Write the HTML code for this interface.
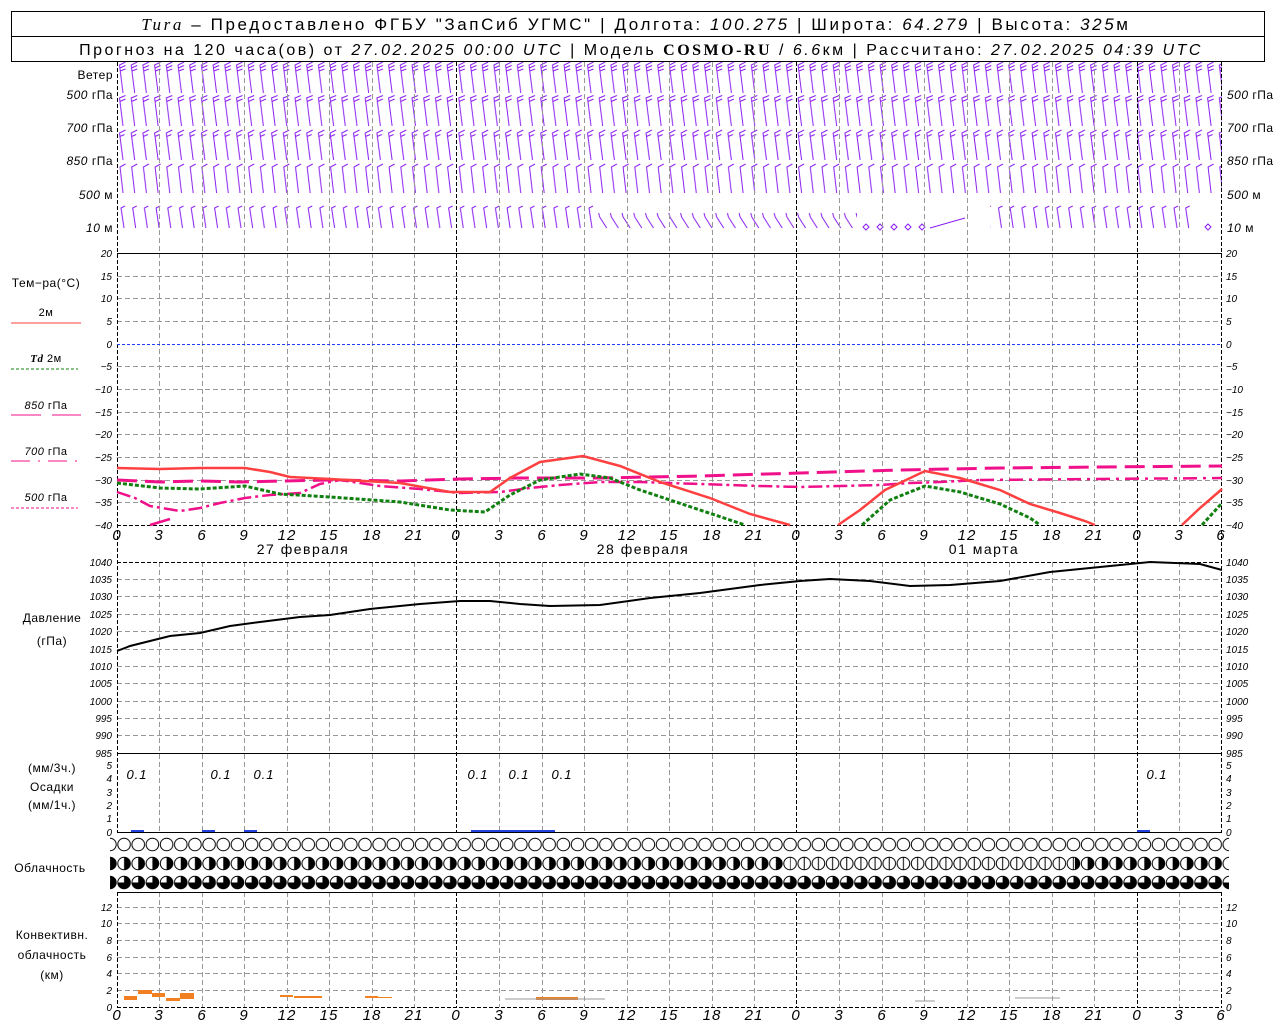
<!DOCTYPE html>
<html><head><meta charset="utf-8"><style>
body{margin:0;background:#fff;width:1280px;height:1024px;overflow:hidden}
svg{display:block}
text{font-family:"Liberation Sans",sans-serif;fill:#000}
.ax{font-size:10px;font-style:italic}
.lb{font-size:12px;letter-spacing:0.5px}
.hr{font-size:15px;font-style:italic}
</style></head><body>
<svg width="1280" height="1024" viewBox="0 0 1280 1024">
<defs>
<pattern id="b" x="117" y="62" width="11.7" height="32" patternUnits="userSpaceOnUse">
<path d="M6,31 L2.5,3 L8.5,0 M2.9,6 L8.5,3.5 M3.3,9 L8.5,7" stroke="#8a1ef0" stroke-width="1" fill="none"/>
</pattern>
<pattern id="b2" x="117" y="95" width="11.7" height="33" patternUnits="userSpaceOnUse">
<path d="M6,31 L2.5,3 L8.5,0.5 M2.9,6.5 L8.5,4" stroke="#8a1ef0" stroke-width="1" fill="none"/>
</pattern>
<pattern id="b3" x="117" y="129" width="11.7" height="32" patternUnits="userSpaceOnUse">
<path d="M6,31 L2.5,4 L8.5,1 M2.9,7.5 L7.5,5.5" stroke="#8a1ef0" stroke-width="1" fill="none"/>
</pattern>
<pattern id="b4" x="117" y="162" width="11.7" height="32" patternUnits="userSpaceOnUse">
<path d="M6,31 L3,5 L8.5,2" stroke="#8a1ef0" stroke-width="1" fill="none"/>
</pattern>
<pattern id="b5" x="117" y="205" width="11.7" height="25" patternUnits="userSpaceOnUse">
<path d="M7,23 L4,3 L8,1" stroke="#8a1ef0" stroke-width="1" fill="none"/>
</pattern>
<pattern id="b6" x="117" y="205" width="11.7" height="25" patternUnits="userSpaceOnUse">
<path d="M10,23 L3,12 M3,12 L2,8" stroke="#8a1ef0" stroke-width="1" fill="none"/>
</pattern>
<pattern id="c0" x="117" y="837" width="14.17" height="16" patternUnits="userSpaceOnUse">
<circle cx="7.08" cy="7.5" r="6.3" fill="#fff" stroke="#000" stroke-width="1"/>
</pattern>
<pattern id="c1" x="117" y="856" width="14.17" height="16" patternUnits="userSpaceOnUse">
<circle cx="7.08" cy="7.5" r="6.3" fill="#fff" stroke="#000" stroke-width="1"/>
<path d="M7.08,1.2 A6.3,6.3 0 0,1 7.08,13.8 Z" fill="#000"/>
</pattern>
<pattern id="c2" x="117" y="856" width="14.17" height="16" patternUnits="userSpaceOnUse">
<circle cx="7.08" cy="7.5" r="6.3" fill="#fff" stroke="#000" stroke-width="1"/>
<path d="M7.08,1.2 V13.8" stroke="#000"/>
</pattern>
<pattern id="c3" x="117" y="875" width="14.17" height="16" patternUnits="userSpaceOnUse">
<circle cx="7.08" cy="7.5" r="6.3" fill="#fff" stroke="#000" stroke-width="1"/>
<path d="M7.08,1.2 A6.3,6.3 0 1,1 0.78,7.5 L7.08,7.5 Z" fill="#000"/>
</pattern>
</defs>

<!-- header -->
<rect x="11.5" y="11.5" width="1253" height="50" fill="none" stroke="#000"/>
<line x1="11" y1="36.5" x2="1265" y2="36.5" stroke="#000"/>
<text x="636" y="30" text-anchor="middle" font-size="17" letter-spacing="2.6"><tspan font-family="Liberation Serif" font-style="italic">Tura</tspan> – Предоставлено ФГБУ "ЗапСиб УГМС" | Долгота: <tspan font-style="italic">100.275</tspan> | Широта: <tspan font-style="italic">64.279</tspan> | Высота: <tspan font-style="italic">325</tspan>м</text>
<text x="641" y="55" text-anchor="middle" font-size="16" letter-spacing="2.5">Прогноз на 120 часа(ов) от <tspan font-style="italic">27.02.2025 00:00 UTC</tspan>  | Модель <tspan font-family="Liberation Serif" font-weight="bold">COSMO-RU</tspan> / <tspan font-style="italic">6.6</tspan>км | Рассчитано: <tspan font-style="italic">27.02.2025 04:39 UTC</tspan></text>

<!-- wind -->
<rect x="117" y="62" width="1105" height="32" fill="url(#b)"/>
<rect x="117" y="95" width="1105" height="33" fill="url(#b2)"/>
<rect x="117" y="129" width="1105" height="32" fill="url(#b3)"/>
<rect x="117" y="162" width="1105" height="32" fill="url(#b4)"/>
<rect x="117" y="205" width="480" height="25" fill="url(#b5)"/>
<rect x="597" y="205" width="260" height="25" fill="url(#b6)"/>
<rect x="990" y="205" width="200" height="25" fill="url(#b5)"/>
<g fill="none" stroke="#8a1ef0"><path d="M866,224 l3,3 l-3,3 l-3,-3z M880,224 l3,3 l-3,3 l-3,-3z M894,224 l3,3 l-3,3 l-3,-3z M908,224 l3,3 l-3,3 l-3,-3z M922,224 l3,3 l-3,3 l-3,-3z M1208,224 l3,3 l-3,3 l-3,-3z M930,228 l35,-10"/></g>

<g class="lb" font-size="11">
<text x="113" y="79" text-anchor="end">Ветер</text>
<text x="113" y="99" text-anchor="end"><tspan font-style="italic">500</tspan> гПа</text>
<text x="113" y="132" text-anchor="end"><tspan font-style="italic">700</tspan> гПа</text>
<text x="113" y="165" text-anchor="end"><tspan font-style="italic">850</tspan> гПа</text>
<text x="113" y="199" text-anchor="end"><tspan font-style="italic">500</tspan> м</text>
<text x="113" y="232" text-anchor="end"><tspan font-style="italic">10</tspan>  м</text>
<text x="1227" y="99"><tspan font-style="italic">500</tspan> гПа</text>
<text x="1227" y="132"><tspan font-style="italic">700</tspan> гПа</text>
<text x="1227" y="165"><tspan font-style="italic">850</tspan> гПа</text>
<text x="1227" y="199"><tspan font-style="italic">500</tspan> м</text>
<text x="1227" y="232"><tspan font-style="italic">10</tspan>  м</text>
</g>

<!-- vertical grid -->
<g stroke="#999" stroke-dasharray="5,3" stroke-width="1">
<path d="M159.5,62V253M202.5,62V253M244.5,62V253M287.5,62V253M329.5,62V253M372.5,62V253M414.5,62V253M499.5,62V253M542.5,62V253M584.5,62V253M627.5,62V253M669.5,62V253M712.5,62V253M754.5,62V253M839.5,62V253M882.5,62V253M924.5,62V253M967.5,62V253M1009.5,62V253M1052.5,62V253M1094.5,62V253M1179.5,62V253"/>
<path d="M159.5,253V525M202.5,253V525M244.5,253V525M287.5,253V525M329.5,253V525M372.5,253V525M414.5,253V525M499.5,253V525M542.5,253V525M584.5,253V525M627.5,253V525M669.5,253V525M712.5,253V525M754.5,253V525M839.5,253V525M882.5,253V525M924.5,253V525M967.5,253V525M1009.5,253V525M1052.5,253V525M1094.5,253V525M1179.5,253V525"/>
<path d="M159.5,562V832M202.5,562V832M244.5,562V832M287.5,562V832M329.5,562V832M372.5,562V832M414.5,562V832M499.5,562V832M542.5,562V832M584.5,562V832M627.5,562V832M669.5,562V832M712.5,562V832M754.5,562V832M839.5,562V832M882.5,562V832M924.5,562V832M967.5,562V832M1009.5,562V832M1052.5,562V832M1094.5,562V832M1179.5,562V832"/>
<path d="M159.5,892V1007M202.5,892V1007M244.5,892V1007M287.5,892V1007M329.5,892V1007M372.5,892V1007M414.5,892V1007M499.5,892V1007M542.5,892V1007M584.5,892V1007M627.5,892V1007M669.5,892V1007M712.5,892V1007M754.5,892V1007M839.5,892V1007M882.5,892V1007M924.5,892V1007M967.5,892V1007M1009.5,892V1007M1052.5,892V1007M1094.5,892V1007M1179.5,892V1007"/>
<path d="M117,276.5H1222M117,298.5H1222M117,321.5H1222M117,366.5H1222M117,389.5H1222M117,412.5H1222M117,434.5H1222M117,457.5H1222M117,480.5H1222M117,502.5H1222"/>
<path d="M117,579.5H1222M117,596.5H1222M117,614.5H1222M117,631.5H1222M117,649.5H1222M117,666.5H1222M117,683.5H1222M117,701.5H1222M117,718.5H1222M117,735.5H1222"/>
<path d="M117,990.5H1222M117,973.5H1222M117,957.5H1222M117,940.5H1222M117,923.5H1222M117,907.5H1222"/>
</g>
<g stroke="#000" stroke-dasharray="4,2" stroke-width="1">
<path d="M117.5,62V832M117.5,892V1007M456.5,62V832M456.5,892V1007M796.5,62V832M796.5,892V1007M1137.5,62V832M1137.5,892V1007M1221.5,62V832M1221.5,892V1007"/>
<path d="M117,525.5H1222M117,562.5H1222M117,1007.5H1222"/>
</g>
<path d="M117,253.5H1222M117,753.5H1222M117,832.5H1222M117,892.5H1222" stroke="#000"/>
<path d="M117,344.5H1222" stroke="#2040ff" stroke-dasharray="3,2"/>

<g class="ax">
<g text-anchor="end">
<text x="112" y="257">20</text><text x="112" y="280">15</text><text x="112" y="302">10</text><text x="112" y="325">5</text><text x="112" y="348">0</text><text x="112" y="370">−5</text><text x="112" y="393">−10</text><text x="112" y="416">−15</text><text x="112" y="438">−20</text><text x="112" y="461">−25</text><text x="112" y="484">−30</text><text x="112" y="506">−35</text><text x="112" y="529">−40</text>
<text x="112" y="566">1040</text><text x="112" y="583">1035</text><text x="112" y="600">1030</text><text x="112" y="618">1025</text><text x="112" y="635">1020</text><text x="112" y="653">1015</text><text x="112" y="670">1010</text><text x="112" y="687">1005</text><text x="112" y="705">1000</text><text x="112" y="722">995</text><text x="112" y="739">990</text><text x="112" y="757">985</text>
<text x="112" y="769">5</text><text x="112" y="782">4</text><text x="112" y="796">3</text><text x="112" y="809">2</text><text x="112" y="822">1</text><text x="112" y="836">0</text>
<text x="112" y="911">12</text><text x="112" y="927">10</text><text x="112" y="944">8</text><text x="112" y="961">6</text><text x="112" y="977">4</text><text x="112" y="994">2</text><text x="112" y="1011">0</text>
</g>
<text x="1226" y="257">20</text><text x="1226" y="280">15</text><text x="1226" y="302">10</text><text x="1226" y="325">5</text><text x="1226" y="348">0</text><text x="1226" y="370">−5</text><text x="1226" y="393">−10</text><text x="1226" y="416">−15</text><text x="1226" y="438">−20</text><text x="1226" y="461">−25</text><text x="1226" y="484">−30</text><text x="1226" y="506">−35</text><text x="1226" y="529">−40</text>
<text x="1226" y="566">1040</text><text x="1226" y="583">1035</text><text x="1226" y="600">1030</text><text x="1226" y="618">1025</text><text x="1226" y="635">1020</text><text x="1226" y="653">1015</text><text x="1226" y="670">1010</text><text x="1226" y="687">1005</text><text x="1226" y="705">1000</text><text x="1226" y="722">995</text><text x="1226" y="739">990</text><text x="1226" y="757">985</text>
<text x="1226" y="769">5</text><text x="1226" y="782">4</text><text x="1226" y="796">3</text><text x="1226" y="809">2</text><text x="1226" y="822">1</text><text x="1226" y="836">0</text>
<text x="1226" y="911">12</text><text x="1226" y="927">10</text><text x="1226" y="944">8</text><text x="1226" y="961">6</text><text x="1226" y="977">4</text><text x="1226" y="994">2</text><text x="1226" y="1011">0</text>
</g>

<g class="hr" text-anchor="middle" letter-spacing="1">
<text x="117" y="540">0</text><text x="159" y="540">3</text><text x="202" y="540">6</text><text x="244" y="540">9</text><text x="287" y="540">12</text><text x="329" y="540">15</text><text x="372" y="540">18</text><text x="414" y="540">21</text><text x="456" y="540">0</text><text x="499" y="540">3</text><text x="542" y="540">6</text><text x="584" y="540">9</text><text x="627" y="540">12</text><text x="669" y="540">15</text><text x="712" y="540">18</text><text x="754" y="540">21</text><text x="796" y="540">0</text><text x="839" y="540">3</text><text x="882" y="540">6</text><text x="924" y="540">9</text><text x="967" y="540">12</text><text x="1009" y="540">15</text><text x="1052" y="540">18</text><text x="1094" y="540">21</text><text x="1137" y="540">0</text><text x="1179" y="540">3</text><text x="1221" y="540">6</text>
<text x="117" y="1020">0</text><text x="159" y="1020">3</text><text x="202" y="1020">6</text><text x="244" y="1020">9</text><text x="287" y="1020">12</text><text x="329" y="1020">15</text><text x="372" y="1020">18</text><text x="414" y="1020">21</text><text x="456" y="1020">0</text><text x="499" y="1020">3</text><text x="542" y="1020">6</text><text x="584" y="1020">9</text><text x="627" y="1020">12</text><text x="669" y="1020">15</text><text x="712" y="1020">18</text><text x="754" y="1020">21</text><text x="796" y="1020">0</text><text x="839" y="1020">3</text><text x="882" y="1020">6</text><text x="924" y="1020">9</text><text x="967" y="1020">12</text><text x="1009" y="1020">15</text><text x="1052" y="1020">18</text><text x="1094" y="1020">21</text><text x="1137" y="1020">0</text><text x="1179" y="1020">3</text><text x="1221" y="1020">6</text>
</g>
<g font-size="14" text-anchor="middle" letter-spacing="1.5">
<text x="303" y="554">27 февраля</text><text x="643" y="554">28 февраля</text><text x="984" y="554">01 марта</text>
</g>

<g class="lb" text-anchor="middle">
<text x="46" y="287">Тем−ра(°С)</text>
<text x="46" y="316" font-size="11">2м</text>
<text x="46" y="362" font-size="11"><tspan font-family="Liberation Serif" font-style="italic" font-weight="bold">Td</tspan>  2м</text>
<text x="46" y="409" font-size="11"><tspan font-style="italic">850</tspan> гПа</text>
<text x="46" y="455" font-size="11"><tspan font-style="italic">700</tspan> гПа</text>
<text x="46" y="501" font-size="11"><tspan font-style="italic">500</tspan> гПа</text>
<text x="52" y="622">Давление</text>
<text x="52" y="645">(гПа)</text>
<text x="52" y="772">(мм/3ч.)</text>
<text x="52" y="791">Осадки</text>
<text x="52" y="809">(мм/1ч.)</text>
<text x="50" y="872">Облачность</text>
<text x="52" y="939">Конвективн.</text>
<text x="52" y="959">облачность</text>
<text x="52" y="979">(км)</text>
</g>
<path d="M11,323H81" stroke="#ff4040"/>
<path d="M11,369H78" stroke="#108010" stroke-dasharray="3,2"/>
<path d="M11,415H41M52,415H81" stroke="#f0108a"/>
<path d="M11,461H30M38,461H40M48,461H67M75,461H77" stroke="#f0108a"/>
<path d="M11,508H78" stroke="#f0108a" stroke-dasharray="3,2"/>

<g fill="none" stroke-width="2.5">
<path d="M117,492 L135,498 150,506 180,511 200,508 220,503 245,498 270,495 300,493 320,484 340,480 360,483 380,486 420,489 460,493 500,492 530,488 560,485 600,482 640,482 700,484 760,486 800,487 840,486 880,485 910,483 940,482 980,480" stroke="#f0108a" stroke-dasharray="14,4,3,4"/>
<path d="M150,525 L170,519" stroke="#f0108a"/>
<path d="M980,480 L1222,478" stroke="#f0108a" stroke-dasharray="14,6,3,6"/>
<path d="M117,480 L160,482 200,481 240,482 330,480 400,481 460,479 520,478 600,478 700,476 800,473 900,470 1000,468 1100,467 1222,466" stroke="#f0108a" stroke-dasharray="20,8" stroke-width="3"/>
<path d="M117,468 L160,469 200,468 245,468 270,472 290,477 330,479 400,483 450,492 490,492 510,478 540,462 583,456 620,466 660,482 710,498 750,514 790,525" stroke="#ff4040"/>
<path d="M838,525 L860,510 885,490 925,471 960,478 1000,490 1030,504 1060,513 1085,521 1095,525" stroke="#ff4040"/>
<path d="M1182,525 L1200,508 1222,489" stroke="#ff4040"/>
<path d="M117,483 L160,488 200,489 245,486 280,494 330,497 400,502 450,510 485,512 510,495 540,480 580,474 610,478 640,490 700,510 745,525" stroke="#108010" stroke-dasharray="4,2" stroke-width="3"/>
<path d="M862,525 L890,500 925,486 960,492 1000,504 1030,518 1040,525" stroke="#108010" stroke-dasharray="4,2" stroke-width="3"/>
<path d="M1202,525 L1222,503" stroke="#108010" stroke-dasharray="4,2" stroke-width="3"/>
</g>

<path d="M117,651 L130,646 150,641 170,636 200,633 230,626 260,622 300,617 330,615 370,609 420,604 460,601 490,601 520,604 550,606 600,605 650,598 700,593 760,585 800,581 830,579 870,581 910,586 950,585 1000,581 1050,572 1100,567 1150,562 1200,564 1222,570" fill="none" stroke="#000" stroke-width="2"/>

<g fill="#2040e0"><rect x="131" y="830" width="13" height="2"/><rect x="202" y="830" width="13" height="2"/><rect x="244" y="830" width="13" height="2"/><rect x="471" y="830" width="84" height="2"/><rect x="1137" y="830" width="13" height="2"/></g>
<g font-size="13" font-style="italic" text-anchor="middle" letter-spacing="1"><text x="137" y="779">0.1</text><text x="221" y="779">0.1</text><text x="264" y="779">0.1</text><text x="478" y="779">0.1</text><text x="519" y="779">0.1</text><text x="562" y="779">0.1</text><text x="1157" y="779">0.1</text></g>

<rect x="110" y="837" width="1119" height="16" fill="url(#c0)"/>
<rect x="110" y="856" width="680" height="16" fill="url(#c1)"/>
<rect x="790" y="856" width="285" height="16" fill="url(#c2)"/>
<rect x="1075" y="856" width="154" height="16" fill="url(#c1)"/>
<rect x="110" y="875" width="1119" height="16" fill="url(#c3)"/>

<g fill="#f08020">
<rect x="124" y="996" width="13" height="4"/><rect x="138" y="990" width="14" height="4"/><rect x="152" y="993" width="13" height="4"/><rect x="166" y="998" width="14" height="3"/><rect x="180" y="993" width="14" height="6"/>
<rect x="280" y="995" width="13" height="2"/><rect x="294" y="996" width="14" height="2"/><rect x="308" y="996" width="14" height="2"/><rect x="365" y="996" width="13" height="2"/><rect x="378" y="997" width="14" height="1"/>
<rect x="536" y="997" width="42" height="3"/>
</g>
<path d="M505,999H605M915,1001H935M1015,998H1060" stroke="#999"/>
</svg>
</body></html>
